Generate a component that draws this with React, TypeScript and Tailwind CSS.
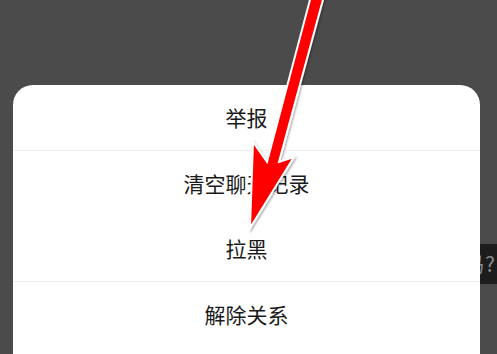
const ITEMS = [
  { label: "举报", divider: true },
  { label: "清空聊天记录", divider: false },
  { label: "拉黑", divider: true },
  { label: "解除关系", divider: false },
];

function Arrow() {
  return (
    <svg
      className="absolute left-0 top-0 pointer-events-none"
      width="497"
      height="354"
      viewBox="0 0 497 354"
    >
      <defs>
        <filter id="shadow" x="-20%" y="-20%" width="140%" height="140%">
          <feDropShadow dx="1" dy="1.5" stdDeviation="1.2" floodColor="#000" floodOpacity="0.35" />
        </filter>
      </defs>
      <polygon
        points="311,-4 324,-4 279,162 294,157 250,228 253,142 267,162"
        fill="#ff0000"
        stroke="#ffffff"
        strokeWidth="2"
        strokeLinejoin="miter"
        filter="url(#shadow)"
      />
    </svg>
  );
}

export default function App() {
  return (
    <div
      className="relative w-[497px] h-[354px] overflow-hidden bg-[#4b4b4b]"
      style={{ fontFamily: '"Noto Sans CJK SC", "Noto Sans", sans-serif' }}
    >
      {/* toast peeking out behind the sheet */}
      <div className="absolute left-[430px] top-[244px] w-[67px] h-[40px] bg-[#1c1c1c] flex items-center justify-end pr-[2px] text-[21px] text-[#8a8a8a] overflow-hidden whitespace-nowrap">
        <span>吗</span>
        <span className="ml-[1px]">?</span>
      </div>

      <div className="pt-[85px] pl-[13px]">
        <div className="relative w-[467px] h-[280px] bg-white rounded-t-[20px] flex flex-col">
          {ITEMS.map((item) => (
            <div
              key={item.label}
              className={`h-[65px] flex items-center justify-center text-[21px] text-[#1a1a1a] ${
                item.divider ? "border-b border-[#efefef] h-[66px]" : ""
              }`}
            >
              {item.label}
            </div>
          ))}
        </div>
      </div>

      <Arrow />
    </div>
  );
}
